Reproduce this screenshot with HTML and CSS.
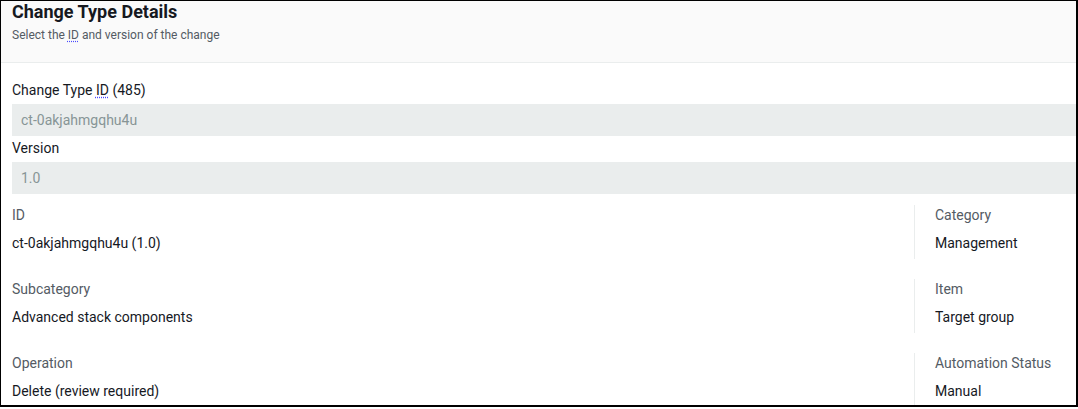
FILE: index.html
```html
<!DOCTYPE html>
<html lang="en">
<head>
    <meta charset="UTF-8">
    <meta name="viewport" content="width=device-width, initial-scale=1.0">
    <title>Change Type Details</title>
    <link rel="stylesheet" href="styles.css">
</head>
<body>
    <div class="panel">
        <header class="panel-header">
            <h2>Change Type Details</h2>
            <p>Select the <abbr>ID</abbr> and version of the change</p>
        </header>

        <div class="panel-body">
            <label class="field-label" for="ctId">Change Type <abbr>ID</abbr> (485)</label>
            <input class="field-input" id="ctId" type="text" value="ct-0akjahmgqhu4u" disabled>
            <label class="field-label" for="ctVersion">Version</label>
            <input class="field-input" id="ctVersion" type="text" value="1.0" disabled>

            <div class="details">
                <div class="detail">
                    <div class="detail-key">ID</div>
                    <div class="detail-value">ct-0akjahmgqhu4u (1.0)</div>
                </div>
                <div class="detail divided">
                    <div class="detail-key">Category</div>
                    <div class="detail-value">Management</div>
                </div>
                <div class="detail">
                    <div class="detail-key">Subcategory</div>
                    <div class="detail-value">Advanced stack components</div>
                </div>
                <div class="detail divided">
                    <div class="detail-key">Item</div>
                    <div class="detail-value">Target group</div>
                </div>
                <div class="detail">
                    <div class="detail-key">Operation</div>
                    <div class="detail-value">Delete (review required)</div>
                </div>
                <div class="detail divided">
                    <div class="detail-key">Automation Status</div>
                    <div class="detail-value">Manual</div>
                </div>
            </div>
        </div>
    </div>
</body>
</html>
```

FILE: styles.css
```css
body {
    font-family: Roboto, "Liberation Sans", sans-serif;
    margin: 0;
    background-color: #fff;
    color: #16191f;
}
.panel {
    width: 1075px;
    height: 404px;
    border: 1px solid #000;
    border-right-width: 2px;
    border-bottom-width: 2px;
    overflow: hidden;
}
.panel-header {
    background-color: #fafafa;
    border-bottom: 1px solid #eaeded;
    padding: 0 11px 20px;
    height: 41px;
}
.panel-header h2 {
    margin: 0;
    font-size: 18px;
    line-height: 21px;
    font-weight: 700;
}
.panel-header p {
    margin: 5px 0 0;
    font-size: 12px;
    line-height: 16px;
    color: #545b64;
}
abbr {
    text-decoration: underline dotted #4a4aff;
    text-underline-offset: 2px;
}
.panel-body {
    padding: 17px 0 0 11px;
    font-size: 14px;
    line-height: 20px;
}
.field-label {
    display: block;
    margin-bottom: 4px;
}
.field-label + .field-input + .field-label {
    margin-top: 2px;
}
.field-input {
    display: block;
    box-sizing: border-box;
    width: 100%;
    height: 32px;
    margin: 0;
    padding: 0 9px;
    border: 0;
    background-color: #eaeded;
    color: #879596;
    font: inherit;
}
.details {
    display: grid;
    grid-template-columns: 902px 1fr;
    row-gap: 20px;
    margin-top: 11px;
}
.detail {
    height: 54px;
}
.detail.divided {
    border-left: 1px solid #eaeded;
    padding-left: 20px;
}
.detail-key {
    color: #545b64;
    margin-bottom: 8px;
}
```
